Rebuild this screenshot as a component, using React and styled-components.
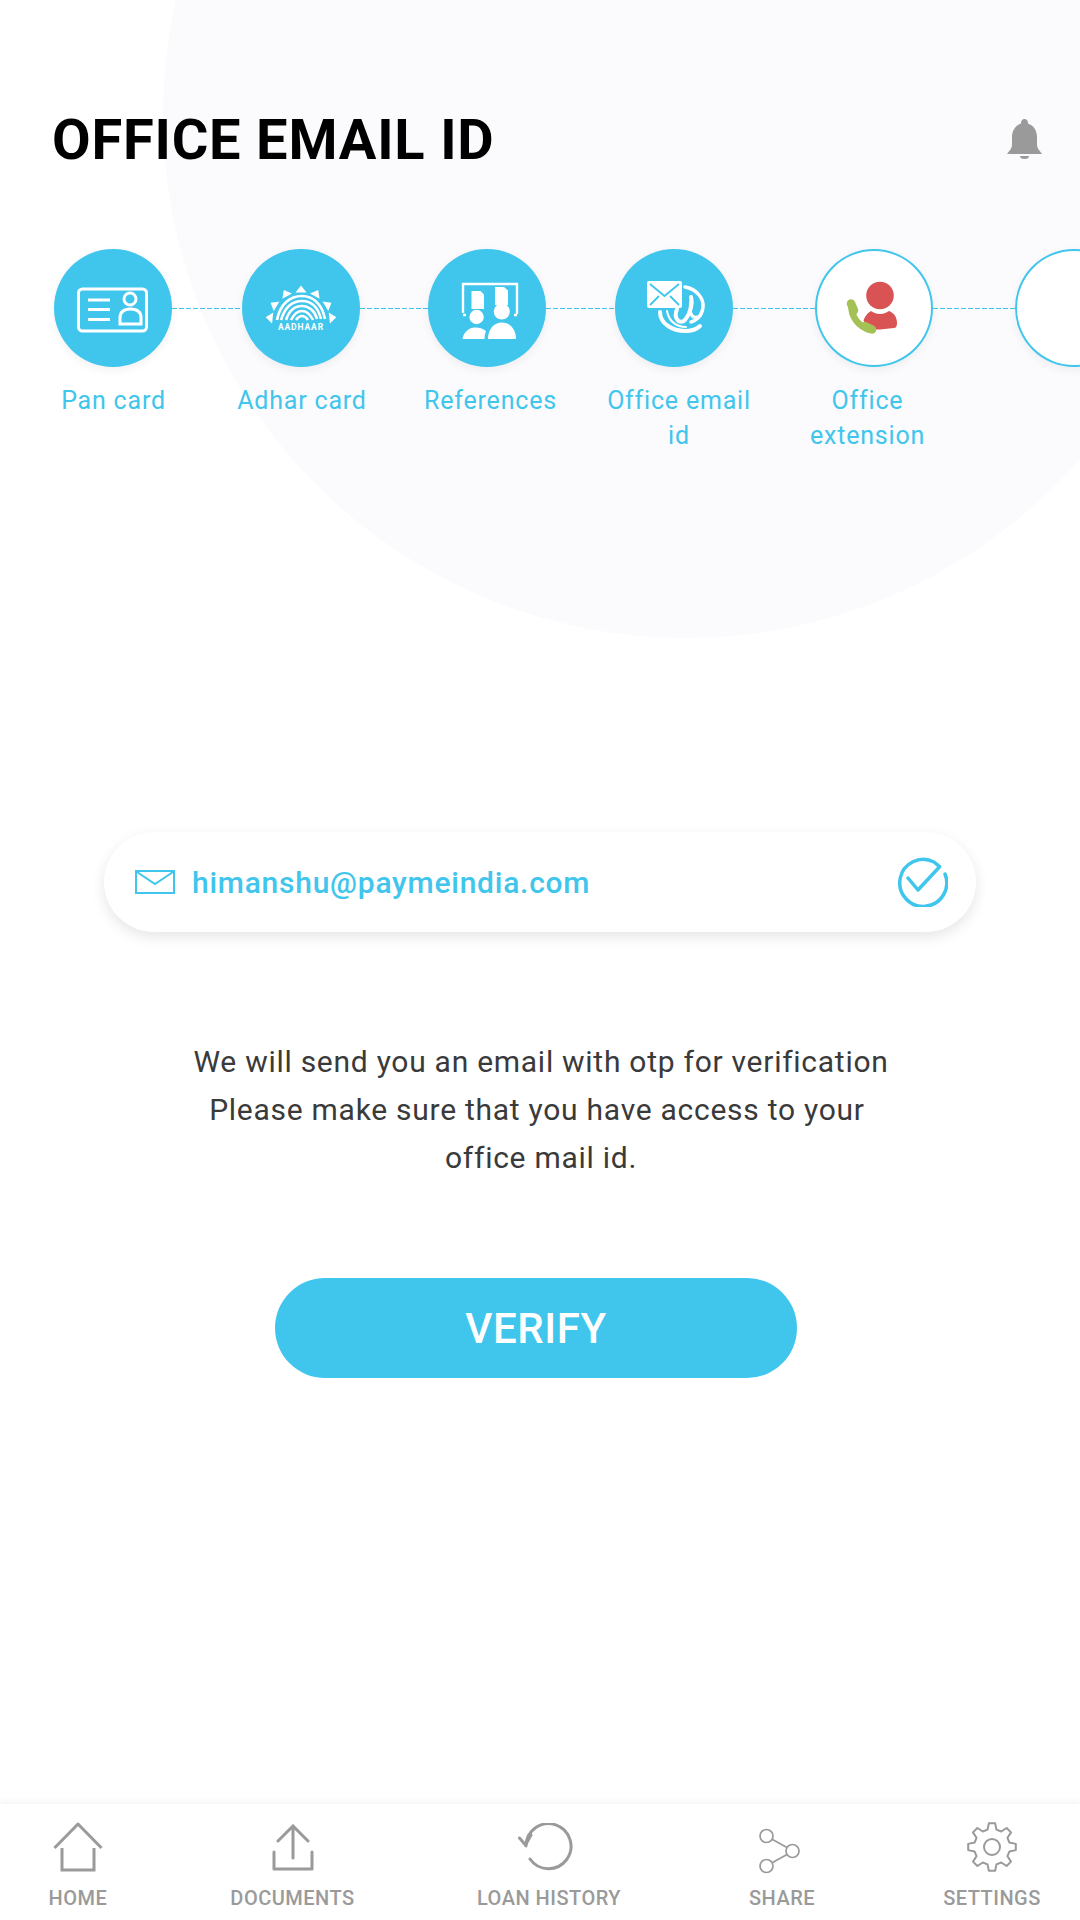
import React from 'react'
import styled, { createGlobalStyle } from 'styled-components'

const BLUE = '#40c5ec'
const GREY = '#9a9a9a'

const GlobalStyle = createGlobalStyle`
  html, body {
    margin: 0;
    padding: 0;
    background: #fff;
    font-family: Roboto, "Liberation Sans", sans-serif;
  }
`

const Page = styled.div`
  position: relative;
  display: flex;
  flex-direction: column;
  width: 1080px;
  height: 1920px;
  overflow: hidden;
  background: #fff;
`
const Backdrop = styled.div`
  position: absolute;
  left: 163px;
  top: -408px;
  width: 1046px;
  height: 1046px;
  border-radius: 50%;
  background: #fbfbfd;
`
const Header = styled.header`
  position: relative;
  display: flex;
  align-items: center;
  justify-content: space-between;
  height: 80px;
  margin-top: 100px;
  padding: 0 38px 0 52px;
`
const Title = styled.h1`
  margin: 0;
  font-size: 56px;
  font-weight: 700;
  line-height: 80px;
  letter-spacing: 0.8px;
  color: #000;
`
const Steps = styled.section`
  position: relative;
  margin-top: 69px;
`
const Track = styled.div`
  display: flex;
  align-items: center;
  padding-left: 54px;
`
const Circle = styled.div`
  flex: none;
  display: flex;
  width: 118px;
  height: 118px;
  border-radius: 50%;
  background: ${p => (p.$done ? BLUE : '#fff')};
  box-shadow: ${p => (p.$done ? '' : `inset 0 0 0 2px ${BLUE},`)} 0 3px 10px rgba(0, 0, 0, 0.06);
`
const Connector = styled.div`
  flex: none;
  width: ${p => p.$w}px;
  height: 1px;
  background: repeating-linear-gradient(to right, ${BLUE} 0 5px, transparent 5px 7px);
`
const Labels = styled.div`
  display: flex;
  gap: 38.5px;
  margin-top: 16px;
  padding-left: 38.5px;
`
const Label = styled.div`
  flex: none;
  width: 150px;
  font-size: 25px;
  line-height: 35px;
  letter-spacing: 0.8px;
  text-align: center;
  color: ${BLUE};
`
const EmailField = styled.div`
  position: relative;
  display: flex;
  align-items: center;
  height: 100px;
  margin: 379px 104px 0;
  padding: 0 28px 0 31px;
  border-radius: 50px;
  background: #fff;
  box-shadow: 0 5px 14px rgba(0, 0, 0, 0.1);
`
const EmailText = styled.span`
  flex: 1;
  margin-left: 17px;
  font-size: 30px;
  font-weight: 500;
  letter-spacing: 0.75px;
  color: ${BLUE};
`
const Note = styled.p`
  margin: 106px 0 0;
  padding-left: 2px;
  font-size: 30px;
  line-height: 48px;
  letter-spacing: 0.73px;
  text-align: center;
  color: #3a3a3a;
`
const VerifyButton = styled.button`
  display: block;
  width: 522px;
  height: 100px;
  margin: 96px 0 0 275px;
  border: none;
  border-radius: 50px;
  background: ${BLUE};
  font-family: inherit;
  font-size: 42px;
  font-weight: 500;
  letter-spacing: 0.6px;
  color: #fff;
`
const Nav = styled.nav`
  position: relative;
  display: flex;
  height: 116px;
  margin-top: auto;
  padding-left: 10px;
  background: #fff;
  box-shadow: 0 -2px 8px rgba(0, 0, 0, 0.05);
`
const NavItem = styled.div`
  flex: none;
  display: flex;
  flex-direction: column;
  align-items: center;
  width: ${p => p.$w}px;
`
const NavIcon = styled.div`
  display: flex;
  align-items: center;
  justify-content: center;
  height: 50px;
  margin-top: 18px;
`
const NavLabel = styled.span`
  margin-top: 14px;
  font-size: 20px;
  font-weight: 500;
  line-height: 24px;
  letter-spacing: 0.5px;
  color: ${GREY};
`

const PanIcon = () => (
  <svg width="118" height="118" viewBox="0 0 118 118" fill="none" stroke="#fff" strokeWidth="3">
    <rect x="24.5" y="40" width="68" height="42" rx="4" />
    <path d="M34 51h22M34 60.5h22M34 70.5h22" />
    <circle cx="76" cy="50" r="6" />
    <path d="M66 75v-6c0-6 4-9 10.5-9S87 63 87 69v6z" />
  </svg>
)

const RAYS = [-84, -59, -29, 0, 29, 59, 84]

const AadhaarIcon = () => (
  <svg width="118" height="118" viewBox="0 0 118 118" fill="none">
    {RAYS.map(a => (
      <polygon key={a} points="59,36.5 64.5,43.5 53.5,43.5" fill="#fff" transform={`rotate(${a} 59 72)`} />
    ))}
    <g stroke="#fff" strokeWidth="2.6">
      <path d="M35 71C38 55 48 47 60 47c11 0 20 8 23 23" />
      <path d="M39 71C43 58 50 52 60 52c9 0 16 6 19 18" />
      <path d="M44 71c3-9 9-14 16-14s13 5 15 13" />
      <path d="M49 71c3-6 7-9 11-9s8 3 11 9" />
      <path d="M54 71c2-3 4-4 6-4s4 1 6 4" />
    </g>
    <text x="59" y="81" fill="#fff" fontFamily="Roboto, sans-serif" fontSize="8.5" fontWeight="700" letterSpacing="0.9" textAnchor="middle">AADHAAR</text>
  </svg>
)

const ReferencesIcon = () => (
  <svg width="118" height="118" viewBox="0 0 118 118" fill="#fff">
    <path d="M35 64V35h54v30" fill="none" stroke="#fff" strokeWidth="2.4" />
    <path d="M35 66h3M86 66h3" fill="none" stroke="#fff" strokeWidth="2.4" />
    <path d="M43.5 42h9l3.5 3.5V60H43.500z" />
    <path d="M67 38h9l4 3.500V56H67z" />
    <circle cx="48.600" cy="68" r="7.200" />
    <circle cx="73.800" cy="62.500" r="8" />
    <path d="M34.500 90c1-7 7-11.500 12-11.500 5 0 10 1.500 11.500 4-1 2-1.500 4.500-1.500 7.500z" />
    <path d="M60 90c0-10 6-16.500 14-16.500S88 80 88 90z" />
  </svg>
)

const EmailIcon = () => (
  <svg width="118" height="118" viewBox="0 0 118 118" fill="none">
    <g stroke="#fff" strokeLinecap="round">
      <path d="M45 63c0 12 13 19 25 19 6 0 12-2 15-5" strokeWidth="4" />
      <path d="M52 62c2 11 10 16 19 16" strokeWidth="2" />
      <path d="M70 38c12 2 19 12 18 20-1 10-8 14-12 15" strokeWidth="3.500" />
      <path d="M62 60c-4 10 3 16 8 11 5-6 8-16 6-23" strokeWidth="4" />
      <path d="M76 52c-2 10 0 18 6 16" strokeWidth="3" />
    </g>
    <rect x="32" y="32" width="35" height="27" rx="2" fill="#fff" />
    <path d="M35 35l14.500 12L64 35M35 56l9-9M64 56l-9-9" stroke={BLUE} strokeWidth="1.800" />
  </svg>
)

const ExtensionIcon = () => (
  <svg width="118" height="118" viewBox="0 0 118 118" fill="none">
    <circle cx="65" cy="46.500" r="13.800" fill="#d95355" />
    <path d="M48 76c0-6 3-11 8-14 2 1.500 5 3 9 3s7-1.500 9-3c5 2 8 6 8 12 0 3-1 5-3 5l-14 1.500H50z" fill="#d95355" />
    <path d="M37 55c-2 13 7 25 20 27" stroke="#fff" strokeWidth="11" />
    <path d="M36.500 56c-1 11 7 22 19 25" stroke="#a3c155" strokeWidth="6.500" />
    <path d="M36 54.500l3 7M50 77l7 3.500" stroke="#a3c155" strokeWidth="8.500" strokeLinecap="round" />
  </svg>
)

const BellIcon = () => (
  <svg width="35" height="42" viewBox="0 0 35 42" fill={GREY}>
    <path d="M17.500 0a3.500 3.500 0 0 1 3.300 4.500C27 6.500 30 12 30 18v8c0 3 2 5 5 9H0c3-4 5-6 5-9v-8c0-6 3-11.500 9.200-13.500A3.500 3.500 0 0 1 17.500 0z" />
    <path d="M13 37h9a4.500 3 0 0 1-9 0z" />
  </svg>
)

const MailIcon = () => (
  <svg width="40" height="24" viewBox="0 0 40 24" fill="none" stroke={BLUE} strokeWidth="2">
    <rect x="1" y="1" width="38" height="22" />
    <path d="M2 2l18 12L38 2" />
  </svg>
)

const CheckIcon = () => (
  <svg width="51" height="50" viewBox="0 0 51 50" fill="none" stroke={BLUE} strokeWidth="3.500" strokeLinejoin="round" strokeLinecap="round">
    <path d="M48 17A23.500 23.500 0 1 1 37 5l5.600 4.700L21 33 11 21" />
  </svg>
)

const HomeIcon = () => (
  <svg width="50" height="50" viewBox="0 0 50 50" fill="none" stroke={GREY} strokeWidth="3">
    <path d="M1.500 26L25 2l23.500 24" strokeLinejoin="round" />
    <path d="M9 26v22h32V26" />
  </svg>
)

const UploadIcon = () => (
  <svg width="42" height="47" viewBox="0 0 42 47" fill="none" stroke={GREY} strokeWidth="3" strokeLinecap="round">
    <path d="M21 3v31M6 17L21 2l15 15" />
    <path d="M2 28v17h38V28" strokeLinejoin="round" />
  </svg>
)

const HistoryIcon = () => (
  <svg width="62" height="48" viewBox="0 0 62 48" fill="none" stroke={GREY} strokeWidth="3" strokeLinecap="round">
    <path d="M8 23A22.500 22.500 0 1 1 12 36" />
    <path d="M1.500 15l6 7L13 12" strokeLinejoin="round" />
  </svg>
)

const ShareIcon = () => (
  <svg width="47" height="56" viewBox="0 -9 47 56" fill="none" stroke={GREY} strokeWidth="1.700">
    <circle cx="7.500" cy="8" r="6.500" />
    <circle cx="33.500" cy="23" r="6.500" />
    <circle cx="7.500" cy="38" r="6.500" />
    <path d="M13.500 11.500l14.500 8M13.500 34.500l14.500-8" />
  </svg>
)

// eight-tooth gear outline, top tooth upright
function gearPath(cx, cy, inner, outer) {
  const pts = []
  for (let i = 0; i < 8; i++) {
    const a = -Math.PI / 2 + (i * Math.PI) / 4
    const offsets = [[-0.25, inner], [-0.13, outer], [0.13, outer], [0.25, inner]]
    offsets.forEach(([d, r]) => {
      pts.push(`${(cx + r * Math.cos(a + d)).toFixed(2)} ${(cy + r * Math.sin(a + d)).toFixed(2)}`)
    })
  }
  return `M${pts.join('L')}Z`
}

const GearIcon = () => (
  <svg width="50" height="50" viewBox="0 0 50 50" fill="none" stroke={GREY} strokeWidth="2" strokeLinejoin="round">
    <path d={gearPath(25, 25, 18, 24)} />
    <circle cx="25" cy="25" r="8" />
  </svg>
)

const steps = [
  { icon: <PanIcon />, done: true, gap: 70 },
  { icon: <AadhaarIcon />, done: true, gap: 68 },
  { icon: <ReferencesIcon />, done: true, gap: 69 },
  { icon: <EmailIcon />, done: true, gap: 82 },
  { icon: <ExtensionIcon />, done: false, gap: 82 },
  { icon: null, done: false },
]

const stepLabels = ['Pan card', 'Adhar card', 'References', 'Office email id', 'Office extension']

const navItems = [
  { label: 'HOME', w: 136, icon: <HomeIcon /> },
  { label: 'DOCUMENTS', w: 293, icon: <UploadIcon /> },
  { label: 'LOAN HISTORY', w: 220, icon: <HistoryIcon /> },
  { label: 'SHARE', w: 246, icon: <ShareIcon /> },
  { label: 'SETTINGS', w: 174, icon: <GearIcon /> },
]

export default function App() {
  return (
    <Page>
      <GlobalStyle />
      <Backdrop />
      <Header>
        <Title>OFFICE EMAIL ID</Title>
        <BellIcon />
      </Header>
      <Steps>
        <Track>
          {steps.map((s, i) => (
            <React.Fragment key={i}>
              <Circle $done={s.done}>{s.icon}</Circle>
              {s.gap && <Connector $w={s.gap} />}
            </React.Fragment>
          ))}
        </Track>
        <Labels>
          {stepLabels.map(l => <Label key={l}>{l}</Label>)}
        </Labels>
      </Steps>
      <EmailField>
        <MailIcon />
        <EmailText>himanshu@paymeindia.com</EmailText>
        <CheckIcon />
      </EmailField>
      <Note>
        We will send you an email with otp for verification<br />
        Please make sure that you have access to your&nbsp;<br />
        office mail id.
      </Note>
      <VerifyButton>VERIFY</VerifyButton>
      <Nav>
        {navItems.map(n => (
          <NavItem key={n.label} $w={n.w}>
            <NavIcon>{n.icon}</NavIcon>
            <NavLabel>{n.label}</NavLabel>
          </NavItem>
        ))}
      </Nav>
    </Page>
  )
}
